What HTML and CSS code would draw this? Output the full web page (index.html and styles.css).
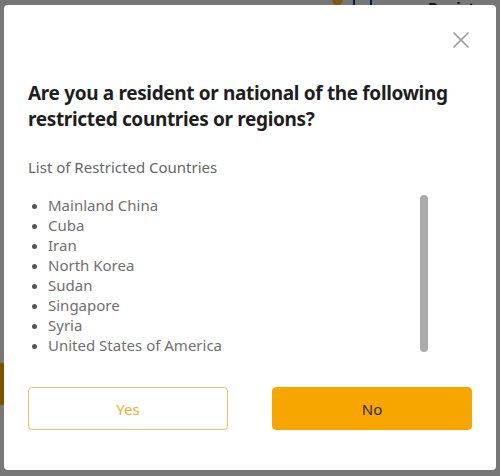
FILE: index.html
```html
<!DOCTYPE html>
<html lang="en">
<head>
<meta charset="utf-8">
<title>Restricted countries</title>
<link rel="stylesheet" href="styles.css">
</head>
<body>
<div class="page">
  <div class="bg-coin"></div>
  <div class="bg-bar bg-bar-1"></div>
  <div class="bg-bar bg-bar-2"></div>
  <div class="bg-text">Regist</div>
  <div class="bg-btn"></div>
</div>
<div class="overlay">
  <div class="modal">
    <div class="modal-head">
      <button class="close" aria-label="Close">
        <svg width="18" height="18" viewBox="0 0 18 18"><path d="M1.5 1.5 L16.5 16.5 M16.5 1.5 L1.5 16.5" stroke="#9a9a9a" stroke-width="1.6" fill="none"/></svg>
      </button>
    </div>
    <h2 class="title">Are you a resident or national of the following restricted countries or regions?</h2>
    <p class="subtitle">List of Restricted Countries</p>
    <div class="list-wrap">
      <ul class="list">
        <li>Mainland China</li>
        <li>Cuba</li>
        <li>Iran</li>
        <li>North Korea</li>
        <li>Sudan</li>
        <li>Singapore</li>
        <li>Syria</li>
        <li>United States of America</li>
      </ul>
      <div class="scrollbar"></div>
    </div>
    <div class="actions">
      <button class="btn btn-yes">Yes</button>
      <button class="btn btn-no">No</button>
    </div>
  </div>
</div>
</body>
</html>
```
FILE: styles.css
```css
* { box-sizing: border-box; }
html, body { margin: 0; padding: 0; }
body {
  width: 500px;
  height: 476px;
  overflow: hidden;
  background: #777777;
  font-family: "Noto Sans", "Open Sans", sans-serif;
  position: relative;
}
.page { position: absolute; inset: 0; }
.bg-coin { position: absolute; left: 332px; top: -6px; width: 11px; height: 11px; border-radius: 50%; background: #7d5a10; }
.bg-bar { position: absolute; top: 0; width: 2px; height: 6px; background: #0c1a4a; }
.bg-bar-1 { left: 353px; }
.bg-bar-2 { left: 370px; }
.bg-text { position: absolute; left: 428px; top: -2px; font-size: 15px; line-height: 18px; font-weight: 700; color: #111; }
.bg-btn { position: absolute; left: 0; top: 363px; width: 6px; height: 42px; background: #7d5300; }

.overlay {
  position: absolute;
  inset: 0;
  padding: 5px 4px 6px 4px;
}
.modal {
  width: 492px;
  height: 465px;
  background: #ffffff;
  border-radius: 4px;
  padding: 0 24px;
  display: flex;
  flex-direction: column;
}
.modal-head {
  display: flex;
  justify-content: flex-end;
  padding-top: 21px;
  height: 74px;
  margin-right: -3px;
}
.close {
  width: 28px;
  height: 28px;
  border: 0;
  background: none;
  padding: 0;
  display: flex;
  align-items: center;
  justify-content: center;
  cursor: pointer;
}
.title {
  margin: 0;
  font-size: 19px;
  letter-spacing: -0.35px;
  line-height: 26px;
  font-weight: 700;
  color: #1e1e1e;
  padding-top: 1px;
}
.subtitle {
  margin: 0;
  padding-top: 24px;
  font-size: 15px;
  line-height: 22px;
  color: #666666;
}
.list-wrap {
  margin-top: 17px;
  display: flex;
  height: 160px;
}
.list {
  flex: 0 0 392px;
  margin: 0;
  padding: 0 0 0 20px;
  list-style: disc;
  color: #707070;
  font-size: 15px;
  line-height: 20px;
}
.list li::marker { color: #555; font-size: 13px; }
.scrollbar {
  width: 8px;
  height: 157px;
  background: #ababab;
  border-radius: 4px;
}
.actions {
  display: flex;
  gap: 44px;
  margin-top: 32px;
}
.btn {
  flex: 1;
  height: 43px;
  border-radius: 4px;
  font-family: "Noto Sans", "Open Sans", sans-serif;
  font-size: 15px;
  cursor: pointer;
}
.btn-yes {
  background: #ffffff;
  border: 1px solid #f8c05a;
  color: #f5ad2a;
}
.btn-no {
  background: #f7a600;
  border: 1px solid #f7a600;
  color: #2b2b2b;
}
```
